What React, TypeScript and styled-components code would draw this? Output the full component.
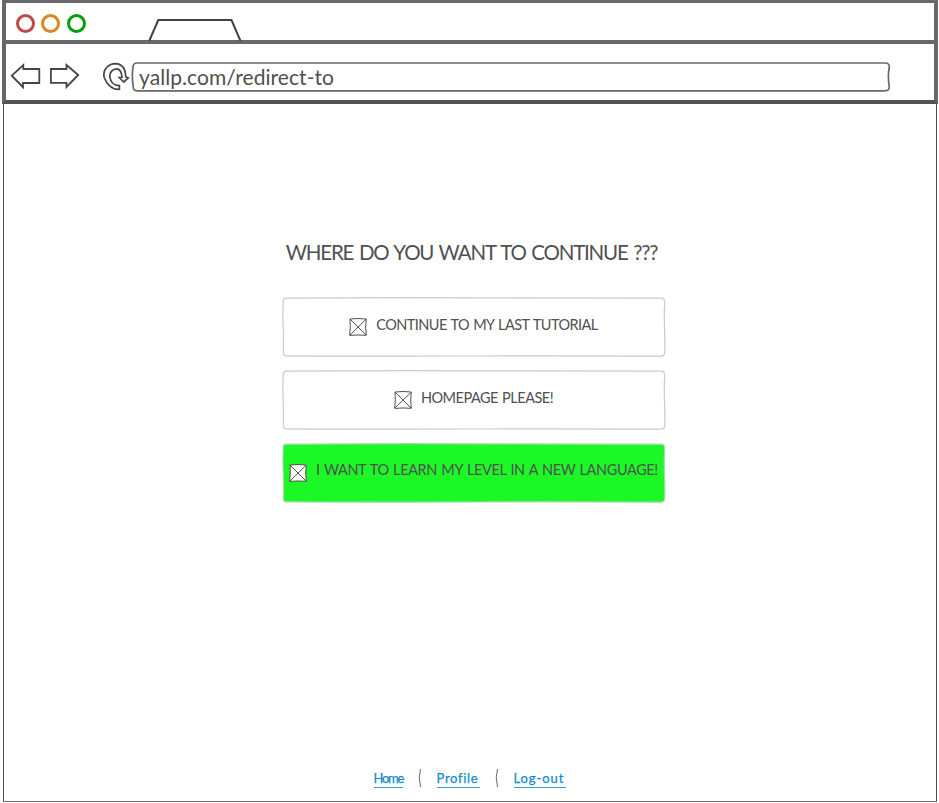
import React from "react";
import styled, { createGlobalStyle } from "styled-components";

const GlobalStyle = createGlobalStyle`
  * { box-sizing: border-box; }
  html, body { margin: 0; background: #fff; }
  body { overflow: hidden; font-family: Lato, "Open Sans", sans-serif; color: #505050; }
`;

const Window = styled.div`
  width: 939px;
  height: 803px;
  display: flex;
  flex-direction: column;
`;

const Chrome = styled.header`
  width: 936px;
  height: 104px;
  margin-left: 2px;
  border: 4px solid #686868;
  border-top-width: 3px;
  border-bottom-color: #545454;
  flex: none;
`;

const TitleBar = styled.div`
  height: 41px;
  display: flex;
  align-items: flex-start;
  border-bottom: 4px solid #686868;
`;

const Lights = styled.div`
  display: flex;
  gap: 6.4px;
  padding: 11px 0 0 9.6px;
`;

const Light = styled.span<{ $color: string }>`
  width: 19.2px;
  height: 19.2px;
  border: 3px solid ${(p) => p.$color};
  border-radius: 50%;
`;

const TabShape = styled.svg`
  width: 94px;
  height: 23px;
  margin: 15px 0 0 61.6px;
`;

const Toolbar = styled.div`
  height: 56px;
  display: flex;
  align-items: flex-start;
`;

const NavIcons = styled.svg`
  width: 126px;
  height: 56px;
  flex: none;
`;

const AddressBar = styled.div`
  position: relative;
  width: 758px;
  height: 30px;
  margin-top: 18px;
  padding-left: 7px;
  display: flex;
  align-items: center;
`;

const Outline = styled.svg`
  position: absolute;
  inset: 0;
  width: 100%;
  height: 100%;
  overflow: visible;
`;

const Address = styled.span`
  position: relative;
  font-size: 21px;
  line-height: 28px;
  letter-spacing: 0.06px;
  white-space: nowrap;
`;

const Page = styled.main`
  width: 934px;
  height: 698px;
  margin-left: 3px;
  border: 1px solid #505050;
  border-top: 0;
  border-bottom-color: #747474;
  display: flex;
  flex-direction: column;
  align-items: center;
`;

const Title = styled.h1`
  margin: 134px 0 0 3px;
  font-size: 20.5px;
  line-height: 28px;
  font-weight: 400;
  letter-spacing: -1.2px;
  word-spacing: 1.6px;
  white-space: nowrap;
`;

const Choices = styled.div`
  margin: 31px 0 0 7px;
  display: flex;
  flex-direction: column;
  gap: 13px;
`;

const Choice = styled.button`
  position: relative;
  width: 384px;
  height: 60px;
  padding: 0 1px 2px 0;
  border: 0;
  background: none;
  color: #505050;
  font-family: inherit;
  display: flex;
  align-items: center;
  justify-content: center;
  gap: 8px;
`;

const CheckIcon = styled.svg`
  position: relative;
  width: 20px;
  height: 20px;
  margin-top: 1px;
  flex: none;
`;

const ChoiceText = styled.span<{ $spacing: number; $lift: number }>`
  position: relative;
  font-size: 14.5px;
  line-height: 20px;
  margin-top: ${(p) => -p.$lift}px;
  letter-spacing: ${(p) => p.$spacing}px;
  word-spacing: 1px;
  white-space: nowrap;
`;

const Footer = styled.nav`
  margin: auto 0 12px -1px;
  display: flex;
  align-items: center;
  height: 22px;
`;

const FooterLink = styled.a<{ $width: number; $spacing: number }>`
  width: ${(p) => p.$width}px;
  height: 19px;
  border-bottom: 1px solid #2f9fd6;
  color: #118bcb;
  font-size: 13px;
  line-height: 18px;
  letter-spacing: ${(p) => p.$spacing}px;
  white-space: nowrap;
  -webkit-text-stroke: 0.25px #118bcb;
`;

const Divider = styled.svg`
  width: 34px;
  height: 22px;
`;

const choices = [
  { label: "CONTINUE TO MY LAST TUTORIAL", spacing: -0.56, lift: 3 },
  { label: "HOMEPAGE PLEASE!", spacing: -0.5, lift: 3 },
  { label: "I WANT TO LEARN MY LEVEL IN A NEW LANGUAGE!", spacing: -0.37, lift: 5, active: true },
];

const Separator = () => (
  <Divider viewBox="0 0 34 22" fill="none" stroke="#686868">
    <path d="M17.5 2Q15 10 17.5 20" />
  </Divider>
);

export default function App() {
  return (
    <Window>
      <GlobalStyle />
      <Chrome>
        <TitleBar>
          <Lights>
            <Light $color="#bd4a4a" />
            <Light $color="#dc8722" />
            <Light $color="#079d0d" />
          </Lights>
          <TabShape viewBox="0 0 94 23" fill="none" stroke="#424242" strokeWidth="2">
            <path d="M1.2 23L10.3 2H83.5L92.5 23" />
          </TabShape>
        </TitleBar>
        <Toolbar>
          <NavIcons viewBox="6 44 126 56" fill="none" stroke="#464646" strokeWidth="1.8">
            <path d="M11.8 75.7L23.3 65V69H39.3V83H23V87.2Z" />
            <path d="M78.2 75L66.5 65V69H50.9V82.8H66.5V87Z" />
            <path
              strokeWidth="1.7"
              d="M119.4 89.2C112 90 106.5 84 104.2 77.5C102.5 70 108 63.8 115.5 63.7C122.5 64 125.5 69 125.7 76.7L128.3 78L123.7 82L119.2 77.5L122 77.3C121.8 72.5 120 69.2 116.8 68.8C112.5 68.6 109.6 72.5 109.8 76.5C110.4 82 114 85.6 119.4 85.6Z"
            />
          </NavIcons>
          <AddressBar>
            <Outline viewBox="0 0 758 30" fill="none" stroke="#686868" strokeWidth="1.7">
              <path d="M5 1H753Q757.5 1 757.3 5Q755.5 14 757.3 25Q757.2 28.7 753 28.9H5Q1 28.5 1.2 24Q-.4 14 1 5Q1.3 1 5 1Z" />
            </Outline>
            <Address>yallp.com/redirect-to</Address>
          </AddressBar>
        </Toolbar>
      </Chrome>
      <Page>
        <Title>WHERE DO YOU WANT TO CONTINUE ???</Title>
        <Choices>
          {choices.map((c) => (
            <Choice key={c.label} type="button">
              <Outline
                viewBox="0 0 384 60"
                fill={c.active ? "#1cf726" : "none"}
                stroke={c.active ? "#a9d9ab" : "#cbcbcb"}
                strokeWidth="1.2"
              >
                <path d="M4 1.2Q95 .4 192 .8T379 1.2Q382.6 1.2 382.7 5Q382 18 382.5 31T382.8 55Q382.8 59 379 59.2Q278 58.6 192 59T4 58.8Q1.3 58.8 1.4 55Q1.7 43 1.2 30T1.2 5Q1.2 1.4 4 1.2Z" />
              </Outline>
              <CheckIcon viewBox="0 0 20 20" fill="#fff" stroke="#505050">
                <path d="M2 2Q10 1 18.3 2Q17 10 18.3 18.3Q10 17.6 1.7 18.4Q2.8 9 2 2Z" />
                <path d="M2 2L18 18M18 2.3L2 18" />
              </CheckIcon>
              <ChoiceText $spacing={c.spacing} $lift={c.lift}>{c.label}</ChoiceText>
            </Choice>
          ))}
        </Choices>
        <Footer>
          <FooterLink $width={29} $spacing={-1.3}>Home</FooterLink>
          <Separator />
          <FooterLink $width={43} $spacing={0.7}>Profile</FooterLink>
          <Separator />
          <FooterLink $width={52} $spacing={0.9}>Log-out</FooterLink>
        </Footer>
      </Page>
    </Window>
  );
}
